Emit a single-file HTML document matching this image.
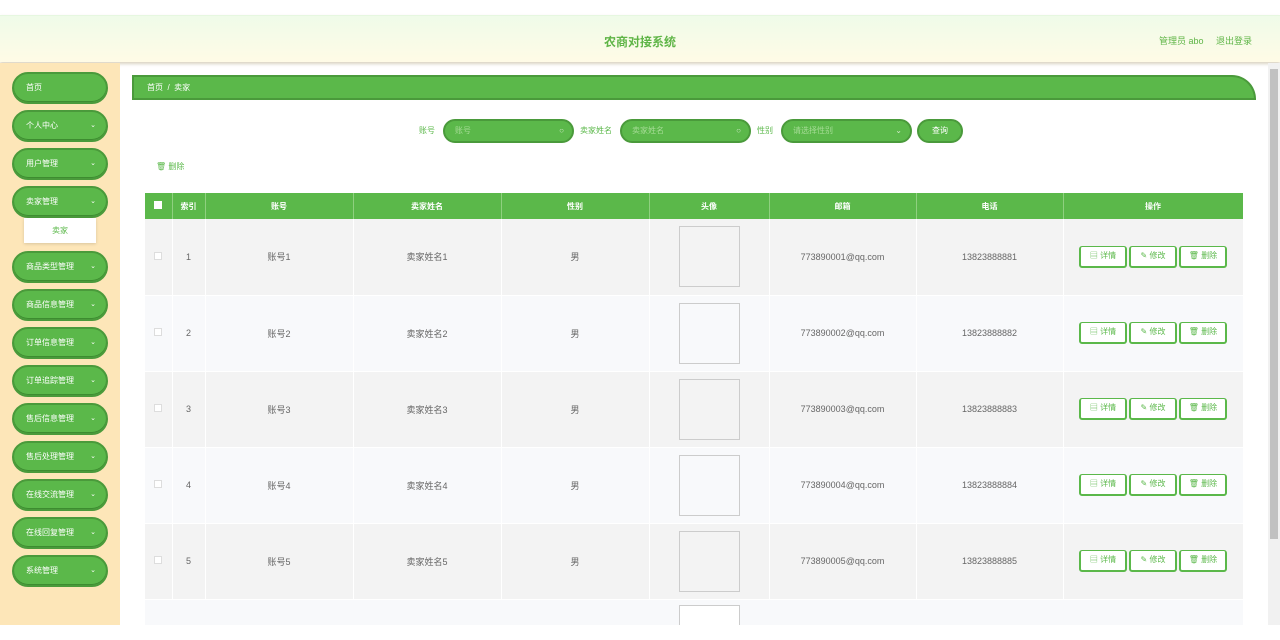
<!DOCTYPE html>
<html style="height:640px;overflow:hidden"><head><meta charset="utf-8"><style>
*{margin:0;padding:0;box-sizing:border-box}
body{width:1280px;height:640px;overflow:hidden;font-family:"Liberation Sans","Noto Sans CJK SC",sans-serif;font-size:9px;color:#555;background:#fff;position:relative}
.hdr{position:absolute;left:0;top:15px;width:1280px;height:47px;background:linear-gradient(180deg,#effbe9,#fffbe6);box-shadow:0 2px 3px rgba(150,130,80,.35);border-top:1px solid #e6f7e0}
.title{position:absolute;left:0;width:1280px;top:17px;text-align:center;font-size:12px;font-weight:bold;color:#5fb547}
.usr{position:absolute;right:28px;top:18px;font-size:9px;color:#5fb547}
.side{position:absolute;left:0;top:63px;width:120px;height:562px;background:#fde6b8}
.mb{position:absolute;left:12px;width:96px;height:32px;background:#5bb84a;border-radius:16px;border:2px solid #4a9a3b;box-shadow:inset 0 -1px 0 #3d8c30;color:#fff;font-size:8px;line-height:28px;padding-left:12px}
.mb i{position:absolute;right:10px;top:0;font-style:normal;font-size:7px}
.sub{position:absolute;left:24px;top:218px;width:72px;height:25px;background:#fff;text-align:center;line-height:25px;color:#5bb84a;font-size:8px;box-shadow:0 1px 3px rgba(0,0,0,.15)}
.crumb{position:absolute;left:132px;top:75px;width:1124px;height:25px;background:#5bb84a;border:2px solid #4a9a3b;border-radius:0 24px 0 0;color:#fff;font-size:8px;line-height:21px;padding-left:13px}
.lbl{position:absolute;top:125px;font-size:8px;color:#5bb84a}
.inp{position:absolute;top:119px;height:24px;background:#5bb84a;border:2px solid #4a9a3b;border-radius:12px;color:#a6dc96;font-size:8px;line-height:20px;padding-left:10px}
.inp i{position:absolute;right:8px;font-style:normal;color:#cfe9c6}
.btn{position:absolute;left:917px;top:119px;width:46px;height:24px;background:#5bb84a;border:2px solid #4a9a3b;border-radius:12px;color:#fff;font-size:8px;line-height:20px;text-align:center}
.del{position:absolute;left:156px;top:161px;font-size:8px;color:#5bb84a}
.tw{position:absolute;left:145px;top:193px;width:1098px;height:432px;overflow:hidden;background:#f8f9fb}
table{width:1098px;border-collapse:collapse;table-layout:fixed}
th{background:#5bb84a;color:#fff;height:26px;font-size:8px;border-right:1px solid #8fd07f;font-weight:bold}
td{height:76px;text-align:center;font-size:9px;color:#666;border-right:1px solid #fff;border-bottom:1px solid #fff}
tr:nth-child(even) td{background:#f3f3f3}
tr:nth-child(odd) td{background:#f8f9fb}
.cb{display:inline-block;width:8px;height:8px;border:1px solid #ddd;background:#fff}
.img{display:inline-block;width:61px;height:61px;border:1px solid #ccc;vertical-align:middle}
.ab{display:inline-block;width:48px;height:22px;border:2px solid #5bb84a;border-top-width:1px;border-radius:3px;background:#fff;color:#5bb84a;line-height:18px;margin:0 1px;font-size:8px}
.sb{position:absolute;left:1268px;top:63px;width:12px;height:562px;background:#f1f1f1}
.sb div{position:absolute;left:2px;top:6px;width:8px;height:470px;background:#c1c1c1}
</style></head><body>
<div class="hdr"><div class="title">农商对接系统</div><div class="usr">管理员 abo &nbsp;&nbsp;&nbsp; 退出登录</div></div>
<div class="side"></div>
<div class="mb" style="top:72px">首页</div>
<div class="mb" style="top:110px">个人中心<i>⌄</i></div>
<div class="mb" style="top:148px">用户管理<i>⌄</i></div>
<div class="mb" style="top:186px">卖家管理<i>⌄</i></div>
<div class="sub">卖家</div>
<div class="mb" style="top:251px">商品类型管理<i>⌄</i></div>
<div class="mb" style="top:289px">商品信息管理<i>⌄</i></div>
<div class="mb" style="top:327px">订单信息管理<i>⌄</i></div>
<div class="mb" style="top:365px">订单追踪管理<i>⌄</i></div>
<div class="mb" style="top:403px">售后信息管理<i>⌄</i></div>
<div class="mb" style="top:441px">售后处理管理<i>⌄</i></div>
<div class="mb" style="top:479px">在线交流管理<i>⌄</i></div>
<div class="mb" style="top:517px">在线回复管理<i>⌄</i></div>
<div class="mb" style="top:555px">系统管理<i>⌄</i></div>
<div class="crumb">首页 &nbsp;/&nbsp; 卖家</div>
<div class="lbl" style="left:419px">账号</div>
<div class="inp" style="left:443px;width:131px">账号<i>○</i></div>
<div class="lbl" style="left:580px">卖家姓名</div>
<div class="inp" style="left:620px;width:131px">卖家姓名<i>○</i></div>
<div class="lbl" style="left:757px">性别</div>
<div class="inp" style="left:781px;width:131px">请选择性别<i>⌄</i></div>
<div class="btn">查询</div>
<div class="del">🗑 删除</div>
<div class="tw"><table>
<colgroup><col style="width:27px"><col style="width:33px"><col style="width:148px"><col style="width:148px"><col style="width:148px"><col style="width:120px"><col style="width:147px"><col style="width:147px"><col style="width:180px"></colgroup>
<tr><th><span class="cb" style="border:none"></span></th><th>索引</th><th>账号</th><th>卖家姓名</th><th>性别</th><th>头像</th><th>邮箱</th><th>电话</th><th>操作</th></tr>
<tr><td><span class="cb"></span></td><td>1</td><td>账号1</td><td>卖家姓名1</td><td>男</td><td><span class="img"></span></td><td>773890001@qq.com</td><td>13823888881</td><td><span class="ab">▤ 详情</span><span class="ab">✎ 修改</span><span class="ab">🗑 删除</span></td></tr>
<tr><td><span class="cb"></span></td><td>2</td><td>账号2</td><td>卖家姓名2</td><td>男</td><td><span class="img"></span></td><td>773890002@qq.com</td><td>13823888882</td><td><span class="ab">▤ 详情</span><span class="ab">✎ 修改</span><span class="ab">🗑 删除</span></td></tr>
<tr><td><span class="cb"></span></td><td>3</td><td>账号3</td><td>卖家姓名3</td><td>男</td><td><span class="img"></span></td><td>773890003@qq.com</td><td>13823888883</td><td><span class="ab">▤ 详情</span><span class="ab">✎ 修改</span><span class="ab">🗑 删除</span></td></tr>
<tr><td><span class="cb"></span></td><td>4</td><td>账号4</td><td>卖家姓名4</td><td>男</td><td><span class="img"></span></td><td>773890004@qq.com</td><td>13823888884</td><td><span class="ab">▤ 详情</span><span class="ab">✎ 修改</span><span class="ab">🗑 删除</span></td></tr>
<tr><td><span class="cb"></span></td><td>5</td><td>账号5</td><td>卖家姓名5</td><td>男</td><td><span class="img"></span></td><td>773890005@qq.com</td><td>13823888885</td><td><span class="ab">▤ 详情</span><span class="ab">✎ 修改</span><span class="ab">🗑 删除</span></td></tr>
</table></div>
<div style="position:absolute;left:679px;top:605px;width:61px;height:20px;border:1px solid #ccc;border-bottom:none;background:#fff"></div>
<div class="sb"><div></div></div>
</body></html>
